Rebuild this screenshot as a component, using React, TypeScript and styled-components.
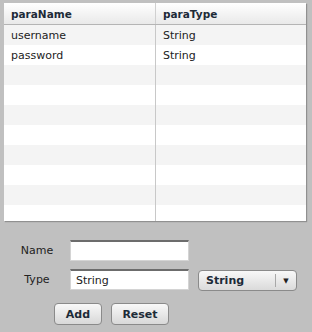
import styled, { createGlobalStyle } from 'styled-components';

const GlobalStyle = createGlobalStyle`
  html, body {
    margin: 0;
    padding: 0;
    background: #c0c0c0;
  }
  body {
    font-family: "DejaVu Sans", Verdana, sans-serif;
  }
`;

const Page = styled.div`
  width: 312px;
  height: 332px;
  padding: 3px 6px 0 4px;
  box-sizing: border-box;
  overflow: hidden;
`;

const Grid = styled.div`
  width: 302px;
  height: 218px;
  background: #fff;
  overflow: hidden;
  box-shadow: 1px 1px 1px rgba(0, 0, 0, 0.25);
`;

const HeaderRow = styled.div`
  display: grid;
  grid-template-columns: 152px 1fr;
  height: 22px;
  box-sizing: border-box;
  border-bottom: 1px solid #b4b4b4;
  background: linear-gradient(#ffffff, #e9e9e9);
`;

const HeaderCell = styled.div`
  display: flex;
  align-items: center;
  padding-left: 7px;
  font-size: 10.5px;
  font-weight: bold;
  color: #1d2b38;
  box-sizing: border-box;
  border-right: 1px solid #d0d0d0;

  &:last-child {
    border-right: none;
  }
`;

const Row = styled.div<{ $odd: boolean }>`
  display: grid;
  grid-template-columns: 152px 1fr;
  height: 20px;
  background: ${p => (p.$odd ? '#ffffff' : '#f4f4f4')};
`;

const Cell = styled.div`
  display: flex;
  align-items: center;
  padding-left: 7px;
  font-size: 11px;
  color: #222;
  box-sizing: border-box;
  border-right: 1px solid #c8c8c8;

  &:last-child {
    border-right: none;
  }
`;

const Form = styled.div`
  display: flex;
  flex-direction: column;
  padding: 19px 0 0 8px;
  gap: 7px;
`;

const FieldRow = styled.div`
  display: flex;
  align-items: center;
`;

const Label = styled.div`
  width: 50px;
  margin-right: 8px;
  text-align: center;
  font-size: 11px;
  color: #222;
`;

const TextInput = styled.input`
  width: 119px;
  height: 21px;
  box-sizing: border-box;
  border: 1px solid #d4d4d4;
  border-top: 2px solid #6c6c6c;
  background: #fff;
  padding: 0 0 0 5px;
  margin: 0;
  font-family: "DejaVu Sans", Verdana, sans-serif;
  font-size: 11px;
  color: #222;
  outline: none;
`;

const Select = styled.div`
  margin: 2px 0 0 9px;
  width: 99px;
  height: 21px;
  box-sizing: border-box;
  display: flex;
  align-items: center;
  border: 1px solid #8a8a8a;
  border-radius: 4px;
  background: linear-gradient(#f8f8f8, #dadada);
`;

const SelectText = styled.div`
  flex: 1;
  padding-left: 7px;
  font-size: 11px;
  font-weight: bold;
  color: #1d2b38;
`;

const SelectArrow = styled.div`
  width: 20px;
  height: 13px;
  border-left: 1px solid #a8a8a8;
  display: flex;
  align-items: center;
  justify-content: center;
  font-size: 7px;
  color: #222;
`;

const Buttons = styled.div`
  display: flex;
  gap: 9px;
  padding: 12px 0 0 50px;
`;

const Button = styled.button<{ $width: number }>`
  width: ${p => p.$width}px;
  height: 22px;
  box-sizing: border-box;
  border: 1px solid #8a8a8a;
  border-radius: 4px;
  background: linear-gradient(#f8f8f8, #d8d8d8);
  font-family: "DejaVu Sans", Verdana, sans-serif;
  font-size: 11px;
  font-weight: bold;
  color: #1d2b38;
  padding: 0;
`;

const params = [
  { name: 'username', type: 'String' },
  { name: 'password', type: 'String' },
];

export default function App() {
  const rows = Array.from({ length: 10 }, (_, i) => params[i] ?? { name: '', type: '' });
  return (
    <Page>
      <GlobalStyle />
      <Grid>
        <HeaderRow>
          <HeaderCell>paraName</HeaderCell>
          <HeaderCell>paraType</HeaderCell>
        </HeaderRow>
        {rows.map((r, i) => (
          <Row key={i} $odd={i % 2 === 1}>
            <Cell>{r.name}</Cell>
            <Cell>{r.type}</Cell>
          </Row>
        ))}
      </Grid>
      <Form>
        <FieldRow>
          <Label>Name</Label>
          <TextInput defaultValue="" />
        </FieldRow>
        <FieldRow>
          <Label>Type</Label>
          <TextInput defaultValue="String" />
          <Select>
            <SelectText>String</SelectText>
            <SelectArrow>▼</SelectArrow>
          </Select>
        </FieldRow>
      </Form>
      <Buttons>
        <Button $width={48}>Add</Button>
        <Button $width={58}>Reset</Button>
      </Buttons>
    </Page>
  );
}
